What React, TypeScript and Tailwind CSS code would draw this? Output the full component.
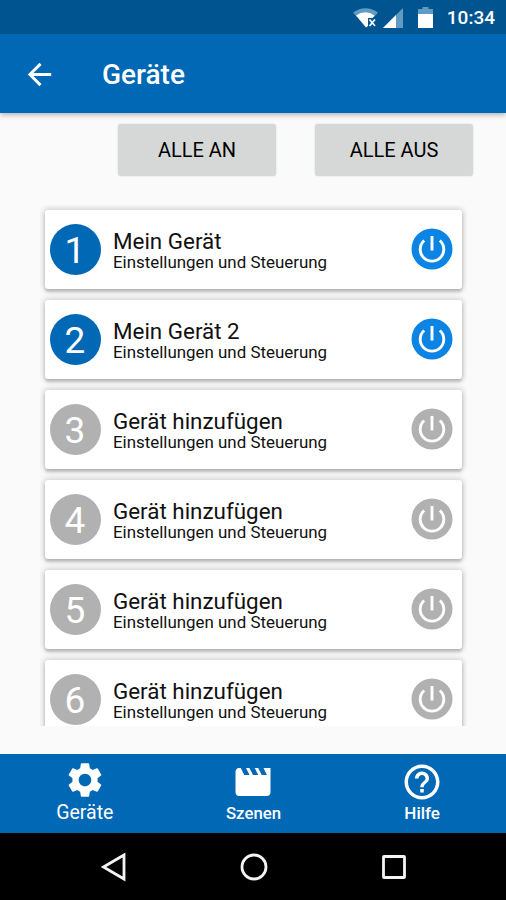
import React from "react";
import {
  MdArrowBack,
  MdHelpOutline,
  MdMovie,
  MdSettings,
} from "react-icons/md";

const devices = [
  { id: 1, name: "Mein Gerät", active: true },
  { id: 2, name: "Mein Gerät 2", active: true },
  { id: 3, name: "Gerät hinzufügen", active: false },
  { id: 4, name: "Gerät hinzufügen", active: false },
  { id: 5, name: "Gerät hinzufügen", active: false },
  { id: 6, name: "Gerät hinzufügen", active: false },
];

const StatusBar = () => {
  return (
    <div className="flex h-[34px] shrink-0 items-center justify-end bg-[#005591] pr-[11px] pt-px text-white">
      <svg width="25" height="20" viewBox="0 0 25 20" className="mr-[5px]">
        <path d="M0 4.500Q12.500 -4 25 4.500L21 9H4Z" fill="#5f9bc3" />
        <path d="M3 7.500Q12.500 1 21.500 7.500L19.500 10H15V18L13 19.500Z" fill="#fff" />
        <path d="M16.500 11.500L22 18M22 11.500L16.500 18" stroke="#fff" strokeWidth="1.700" />
      </svg>
      <svg width="20" height="20" viewBox="0 0 20 20" className="mr-[15px]">
        <path d="M0 20L20 0V20Z" fill="#5f9bc3" />
        <path d="M0 20L13 7V20Z" fill="#fff" />
      </svg>
      <svg width="15" height="21" viewBox="0 0 15 21" className="mr-[14px]">
        <path d="M4.500 0H10.500V2H15V8H0V2H4.500Z" fill="#5f9bc3" />
        <path d="M0 7H15V21H0Z" fill="#fff" />
      </svg>
      <span className="text-[19px] font-medium leading-none">10:34</span>
    </div>
  );
};

const Header = () => {
  return (
    <header className="z-10 flex h-[79px] shrink-0 items-center bg-[#0068b5] pl-[22px] pt-[2px] text-white shadow-[0_2px_5px_rgba(0,0,0,0.28)]">
      <MdArrowBack size={35} />
      <h1 className="ml-[45px] text-[28px] font-medium leading-none">Geräte</h1>
    </header>
  );
};

const PowerIcon = ({ active }: { active: boolean }) => {
  return (
    <svg width="42" height="42" viewBox="0 0 42 42" className="mb-px">
      <circle cx="21" cy="21" r="20.500" fill={active ? "#0c84e4" : "#b1b1b1"} />
      <path
        d="M13.200 12.500A11.800 11.800 0 1 0 28.800 12.500M21 8V22.500"
        fill="none"
        stroke="#fff"
        strokeWidth="2.900"
      />
    </svg>
  );
};

const DeviceCard = ({ device }: { device: (typeof devices)[number] }) => {
  return (
    <li className="flex h-[79px] shrink-0 items-center rounded-[3px] bg-white pl-[5px] pr-[9px] shadow-[0_3px_3px_rgba(0,0,0,0.18),0_0_6px_1px_rgba(0,0,0,0.2)]">
      <div
        className={`flex size-[51px] items-center justify-center rounded-full pr-px pt-px text-[37px] leading-none text-white ${
          device.active ? "bg-[#0068b5]" : "bg-[#b1b1b1]"
        }`}
      >
        {device.id}
      </div>
      <div className="ml-3 flex-1 pt-[3px] text-[#111]">
        <div className="text-[22.4px] leading-[23px]">{device.name}</div>
        <div className="text-[16.9px] leading-[19px]">Einstellungen und Steuerung</div>
      </div>
      <PowerIcon active={device.active} />
    </li>
  );
};

const BottomTabs = () => {
  return (
    <nav className="grid h-[79px] shrink-0 grid-cols-3 bg-[#0068b5] text-white">
      <div className="flex flex-col items-center pl-px pt-[5px]">
        <MdSettings size={42} />
        <span className="mt-[2px] text-[19.5px] leading-[20px]">Geräte</span>
      </div>
      <div className="flex flex-col items-center pl-px pt-[7px]">
        <MdMovie size={42} />
        <span className="text-[16.8px] font-medium leading-[20px]">Szenen</span>
      </div>
      <div className="flex flex-col items-center pl-px pt-[7px]">
        <MdHelpOutline size={42} />
        <span className="text-[17px] font-medium leading-[20px]">Hilfe</span>
      </div>
    </nav>
  );
};

const SystemNav = () => {
  return (
    <div className="flex h-[67px] shrink-0 items-center justify-center gap-[112px] bg-black pl-px">
      <svg width="28" height="30" viewBox="0 0 28 30" fill="none" stroke="#f4f4f4" strokeWidth="2.800">
        <path d="M3.500 15L24 3V27Z" />
      </svg>
      <svg width="28" height="28" viewBox="0 0 28 28" fill="none" stroke="#f4f4f4" strokeWidth="2.800">
        <circle cx="14" cy="14" r="12" />
      </svg>
      <svg width="28" height="28" viewBox="0 0 28 28" fill="none" stroke="#f4f4f4" strokeWidth="2.800">
        <rect x="3.500" y="3.500" width="21" height="21" rx="0.500" />
      </svg>
    </div>
  );
};

const App = () => {
  return (
    <div className="flex h-[900px] w-[506px] flex-col overflow-hidden bg-[#fafafa] font-[Roboto,sans-serif]">
      <StatusBar />
      <Header />
      <main className="flex flex-1 flex-col">
        <div className="flex justify-end gap-[39px] pr-[33px] pt-[11px]">
          <button className="h-[52px] w-[158px] rounded-[3px] bg-[#d6d8d7] text-[20px] text-black shadow-[0_0_2px_rgba(0,0,0,0.15)]">
            ALLE AN
          </button>
          <button className="h-[52px] w-[158px] rounded-[3px] bg-[#d6d8d7] text-[20px] text-black shadow-[0_0_2px_rgba(0,0,0,0.15)]">
            ALLE AUS
          </button>
        </div>
        <ul className="ml-[40px] mt-[29px] flex h-[521px] w-[427px] flex-col gap-[11px] overflow-hidden px-[5px] pt-[5px]">
          {devices.map((device) => (
            <DeviceCard key={device.id} device={device} />
          ))}
        </ul>
      </main>
      <BottomTabs />
      <SystemNav />
    </div>
  );
};

export default App;
